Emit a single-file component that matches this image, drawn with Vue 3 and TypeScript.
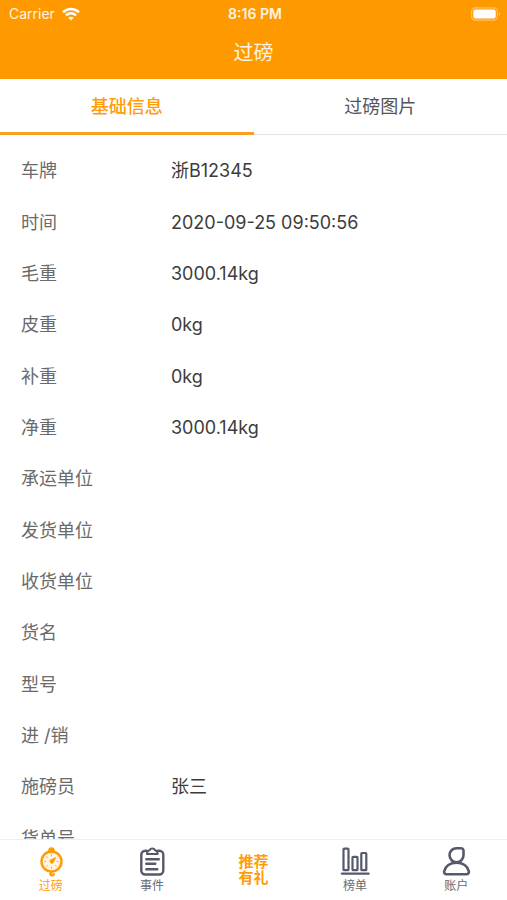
<script setup lang="ts">
import { ref } from 'vue'

interface Field {
  label: string
  value: string
}

const tabs: string[] = ['基础信息', '过磅图片']
const activeTab = ref(0)

const fields: Field[] = [
  { label: '车牌', value: '浙B12345' },
  { label: '时间', value: '2020-09-25 09:50:56' },
  { label: '毛重', value: '3000.14kg' },
  { label: '皮重', value: '0kg' },
  { label: '补重', value: '0kg' },
  { label: '净重', value: '3000.14kg' },
  { label: '承运单位', value: '' },
  { label: '发货单位', value: '' },
  { label: '收货单位', value: '' },
  { label: '货名', value: '' },
  { label: '型号', value: '' },
  { label: '进 /销', value: '' },
  { label: '施磅员', value: '张三' },
  { label: '货单号', value: '' },
]
</script>

<template>
  <div class="screen">
    <header class="header">
      <div class="status">
        <div class="carrier">
          <span>Carrier</span>
          <svg width="18" height="14" viewBox="0 0 18 14" fill="none" stroke="#fff" stroke-width="2.6" aria-hidden="true">
            <path d="M1 5.2C5.5 .9 12.500 .9 17 5.200" />
            <path d="M4 8.400C6.900 5.700 11.100 5.700 14 8.400" />
            <path d="M9 13.600 6.200 10.800C7.800 9.400 10.200 9.400 11.800 10.800Z" fill="#fff" stroke="none" />
          </svg>
        </div>
        <span class="clock">8:16 PM</span>
        <svg class="battery" width="30" height="14" viewBox="0 0 30 14" aria-hidden="true">
          <rect x=".6" y=".8" width="25.800" height="12.400" rx="3.600" fill="none" stroke="#ffc166" stroke-width="1.200" />
          <rect x="2.300" y="2.500" width="22.400" height="9" rx="2" fill="#fff" />
          <path d="M27.800 5v4c1.800-.8 1.800-3.200 0-4Z" fill="#ffc166" />
        </svg>
      </div>
      <h1 class="title">过磅</h1>
    </header>

    <div class="tabs" role="tablist">
      <button
        v-for="(tab, i) in tabs"
        :key="tab"
        type="button"
        role="tab"
        class="tab"
        :class="{ active: activeTab === i }"
        :aria-selected="activeTab === i"
        @click="activeTab = i"
      >
        {{ tab }}
      </button>
    </div>

    <main class="content">
      <dl class="fields">
        <div v-for="field in fields" :key="field.label" class="field">
          <dt>{{ field.label }}</dt>
          <dd>{{ field.value }}</dd>
        </div>
      </dl>
    </main>

    <nav class="nav">
      <a href="#weigh" class="item current">
        <svg width="32" height="32" viewBox="0 0 32 32" fill="none" stroke="#ff9c0a" stroke-linecap="round" aria-hidden="true">
          <circle cx="16.500" cy="15.500" r="10" stroke-width="2.400" fill="#fff4e0" />
          <path d="M14 4.500a2.500 2.500 0 0 1 5 0Z" fill="#ff9c0a" stroke-width="1.600" />
          <path d="M16.500 26v1.400M15.200 27.400a1.700 1.700 0 1 0 3.800.6" stroke-width="2" />
          <path d="M16.500 8.700v1.400M16.500 21v1.400M9.700 15.500h1.400M22 15.500h1.400M11.700 10.700l.8.800M11.700 20.300l.8-.8M21.300 20.300l-.8-.8" stroke-width="1" stroke="#ffb547" />
          <path d="M21.400 10.800 18.600 16.800A2.300 2.300 0 1 1 15.200 13.700Z" fill="#ff9c0a" stroke="none" />
        </svg>
        <span>过磅</span>
      </a>
      <a href="#events" class="item">
        <svg width="32" height="32" viewBox="0 0 32 32" fill="none" stroke="#555a6b" stroke-width="2.400" stroke-linecap="round" stroke-linejoin="round" aria-hidden="true">
          <path d="M10.500 4.700H9.300a4 4 0 0 0-4 4v15.800a4 4 0 0 0 4 4h14a4 4 0 0 0 4-4V8.700a4 4 0 0 0-4-4h-1.200" />
          <path d="M11 7.300c0-2.200 1.200-2.800 2.600-3 .6-2.400 4.800-2.400 5.400 0 1.400.2 2.600.8 2.600 3v.7H11Z" stroke-width="2" />
          <path d="M10.300 13.200h12.500M10.300 17.700h9M10.300 23.300h11" />
        </svg>
        <span>事件</span>
      </a>
      <a href="#invite" class="item invite">推荐<br />有礼</a>
      <a href="#ranking" class="item">
        <svg width="32" height="32" viewBox="0 0 32 32" fill="none" stroke="#555a6b" stroke-width="2.200" stroke-linecap="round" stroke-linejoin="round" aria-hidden="true">
          <rect x="4.500" y="2.700" width="5" height="21.500" rx=".8" />
          <rect x="13.500" y="10.900" width="5" height="13.300" rx=".8" />
          <rect x="22.300" y="7" width="5" height="17.200" rx=".8" />
          <path d="M3 27.600h26.500" stroke-width="2.400" />
        </svg>
        <span>榜单</span>
      </a>
      <a href="#account" class="item">
        <svg width="32" height="32" viewBox="0 0 32 32" fill="none" stroke="#555a6b" stroke-width="2.600" stroke-linejoin="round" aria-hidden="true">
          <path d="M16.500 2.200H21a2.500 2.500 0 0 1 2.500 2.500V9a7 7 0 1 1-7-6.800Z" />
          <path d="M6.600 28.200c-1.800 0-2.800-1.200-2.400-3C5.300 20.200 10 16.600 16.500 16.600S27.700 20.200 28.800 25.200c.4 1.800-.6 3-2.400 3Z" />
        </svg>
        <span>账户</span>
      </a>
    </nav>
  </div>
</template>

<style>
body {
  margin: 0;
  background: #fff;
}
</style>

<style scoped>
.screen {
  display: flex;
  flex-direction: column;
  height: 100vh;
  background: #fff;
  color: #444;
  font-family: Inter, 'Noto Sans CJK SC', sans-serif;
}

.header {
  flex: none;
  box-sizing: border-box;
  height: 79px;
  background: #ff9900;
  color: #fff4e2;
}

.status {
  display: grid;
  grid-template-columns: 1fr auto 1fr;
  align-items: center;
  height: 27px;
  padding: 0 6px 0 9px;
}

.carrier {
  display: flex;
  align-items: center;
  gap: 7px;
  font-size: 14px;
}

.clock {
  font-size: 14px;
  font-weight: 600;
}

.battery {
  justify-self: end;
}

.title {
  margin: 0;
  font-size: 20px;
  font-weight: 400;
  line-height: 52px;
  text-align: center;
}

.tabs {
  flex: none;
  display: flex;
  height: 56px;
  box-shadow: inset 0 -1px #e4e4e4;
}

.tab {
  flex: 1;
  padding: 0 0 1px;
  border: 0;
  border-bottom: 3px solid transparent;
  background: none;
  color: #555;
  font: inherit;
  font-size: 18px;
  cursor: pointer;
}

.tab.active {
  border-color: #f7a021;
  color: #ff9c0a;
  font-weight: 500;
}

.content {
  flex: 1;
  display: flex;
  flex-direction: column;
  min-height: 0;
  overflow-y: auto;
  scrollbar-width: none;
}

.fields {
  flex: 1 0 auto;
  display: grid;
  grid-auto-rows: minmax(51px, 1fr);
  margin: 0 0 -25px;
  padding: 10px 21px 0;
}

.field {
  display: grid;
  grid-template-columns: 150px 1fr;
  align-items: center;
  font-size: 18px;
  line-height: 27px;
}

dt {
  color: #6a6a6a;
}

dd {
  margin: 0;
  color: #3c3c3c;
}

.nav {
  flex: none;
  display: flex;
  box-sizing: border-box;
  height: 61px;
  border-top: 1px solid #eee;
  background: #fff;
}

.item {
  flex: 1;
  display: flex;
  flex-direction: column;
  align-items: center;
  padding-top: 6px;
  color: #666a75;
  font-size: 12px;
  line-height: 16px;
  text-decoration: none;
}

.item.current {
  color: #ff9c0a;
}

.item.invite {
  display: block;
  padding-top: 14px;
  color: #ff9c0a;
  font-size: 15px;
  font-weight: 700;
  text-align: center;
}
</style>
